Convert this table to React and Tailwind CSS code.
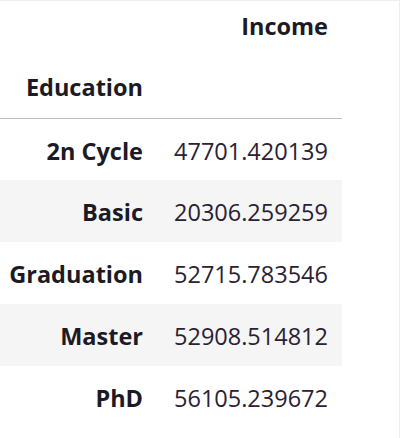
import React from 'react';

const rows = [
    ['2n Cycle', '47701.420139'],
    ['Basic', '20306.259259'],
    ['Graduation', '52715.783546'],
    ['Master', '52908.514812'],
    ['PhD', '56105.239672'],
];

// pandas-style DataFrame table
const App = () => {
    return (
        <div className="w-[400px] h-[438px] bg-white border-r border-t border-[#eeeeee] overflow-hidden" style={{ fontFamily: '"Open Sans", "Noto Sans", sans-serif' }}>
            <table className="w-[342px] border-collapse text-[23.5px] text-[#1c1a24]">
                <thead>
                    <tr className="h-[56px]">
                        <th className="w-[157px]"></th>
                        <th className="text-right font-bold pr-[14px] pb-[4px]">Income</th>
                    </tr>
                    <tr className="h-[61px] border-b border-[#bdbdbd]">
                        <th className="text-right font-bold pr-[14px]">Education</th>
                        <th></th>
                    </tr>
                </thead>
                <tbody>
                    {rows.map(([label, value], i) => (
                        <tr key={label} className={`h-[62px] ${i % 2 === 1 ? 'bg-[#f5f5f5]' : 'bg-white'}`}>
                            <th className="text-right font-bold pr-[14px] pt-[4px]">{label}</th>
                            <td className="text-right font-normal pr-[14px] pt-[4px] text-[#2a2233]">{value}</td>
                        </tr>
                    ))}
                </tbody>
            </table>
        </div>
    );
};

export default App;
